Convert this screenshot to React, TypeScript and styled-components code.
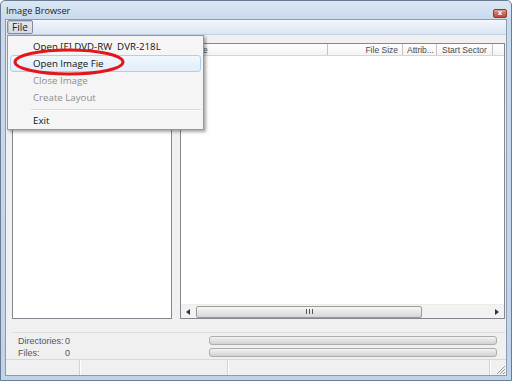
import React from 'react';
import styled, { createGlobalStyle } from 'styled-components';

const GlobalStyle = createGlobalStyle`
  html, body {
    margin: 0;
    padding: 0;
    width: 512px;
    height: 381px;
    overflow: hidden;
    background: #ffffff;
  }
  * {
    box-sizing: border-box;
  }
`;

const Window = styled.div`
  position: relative;
  width: 512px;
  height: 381px;
  display: flex;
  flex-direction: column;
  border: 1px solid #6b7c92;
  border-radius: 5px 5px 0 0;
  background: linear-gradient(180deg, #dbe7f4 0px, #c9daee 18px, #bfd3ea 100%);
  font-family: "Open Sans", "Noto Sans", sans-serif;
`;

const TitleBar = styled.div`
  height: 18px;
  display: flex;
  align-items: flex-start;
  justify-content: space-between;
  padding: 0 4px 0 5px;
`;

const Title = styled.span`
  margin-top: 3px;
  font-size: 9.2px;
  color: #222222;
`;

const CloseButton = styled.div`
  margin-top: 8px;
  width: 14px;
  height: 9px;
  border: 1px solid #8a3b30;
  border-radius: 2px;
  background: linear-gradient(180deg, #e3a392 0%, #cf6a55 50%, #c04a36 100%);
  color: #ffffff;
  font-family: "DejaVu Sans", sans-serif;
  font-size: 7px;
  font-weight: bold;
  line-height: 7px;
  text-align: center;
`;

const Client = styled.div`
  position: relative;
  flex: 1;
  margin: 0 4px 4px 4px;
  border: 1px solid #8a9cb4;
  background: #f0f0f0;
  display: flex;
  flex-direction: column;
`;

const MenuBar = styled.div`
  height: 15px;
  display: flex;
  align-items: center;
  padding-left: 1px;
  background: linear-gradient(180deg, #f4f7fb 0%, #e6edf7 50%, #dbe5f2 100%);
  border-bottom: 1px solid #c5d2e3;
`;

const MenuButton = styled.div`
  height: 14px;
  padding: 0 4px;
  display: flex;
  align-items: center;
  border: 1px solid #7f8ea3;
  border-radius: 2px;
  background: linear-gradient(180deg, #e4e9f0 0%, #d3dbe6 100%);
  box-shadow: inset 1px 1px 1px rgba(0, 0, 0, 0.15);
  font-size: 10px;
  color: #1a1a1a;
`;

const Body = styled.div`
  height: 284px;
  display: flex;
  padding: 8px 1px 0 6px;
  gap: 8px;
`;

const TreePane = styled.div`
  width: 160px;
  border: 1px solid #828790;
  background: #ffffff;
`;

const ListPane = styled.div`
  flex: 1;
  display: flex;
  flex-direction: column;
  border: 1px solid #828790;
  background: #ffffff;
`;

const HeaderRow = styled.div`
  height: 12px;
  display: flex;
  border-bottom: 1px solid #d5d5d5;
  background: linear-gradient(180deg, #ffffff 0%, #f3f3f3 100%);
  font-family: "Liberation Sans", Arial, sans-serif;
  font-size: 8.5px;
  color: #4a4a4a;
`;

const HeaderCell = styled.div<{ $w?: number; $align?: string }>`
  ${(p) => (p.$w ? `width: ${p.$w}px;` : 'flex: 1;')}
  display: flex;
  align-items: center;
  justify-content: ${(p) => p.$align || 'flex-start'};
  padding: 0 4px;
  border-right: 1px solid #c4c4c4;
  white-space: nowrap;
  overflow: hidden;
`;

const HeaderFill = styled.div`
  flex: 1;
`;

const ListContent = styled.div`
  flex: 1;
`;

const HScroll = styled.div`
  height: 14px;
  display: flex;
  align-items: center;
  background: #f2f2f2;
  border-top: 1px solid #ececec;
`;

const ArrowBox = styled.div`
  width: 14px;
  height: 13px;
  display: flex;
  align-items: center;
  justify-content: center;
`;

const Thumb = styled.div`
  width: 226px;
  height: 12px;
  margin-left: 1px;
  border: 1px solid #9a9a9a;
  border-radius: 2px;
  background: linear-gradient(180deg, #f6f6f6 0%, #e6e6e6 50%, #d7d7d7 100%);
  display: flex;
  align-items: center;
  justify-content: center;
`;

const Grip = styled.div`
  width: 7px;
  height: 5px;
  background: repeating-linear-gradient(90deg, #555 0px, #555 1px, transparent 1px, transparent 3px);
`;

const Track = styled.div`
  flex: 1;
`;

const InfoPanel = styled.div`
  height: 27px;
  margin: 13px 1px 0 6px;
  border-top: 1px solid #dedede;
  display: flex;
  justify-content: space-between;
  font-family: "Liberation Sans", Arial, sans-serif;
  font-size: 9px;
  color: #555555;
`;

const Counts = styled.div`
  display: grid;
  grid-template-columns: 47px auto;
  grid-auto-rows: 12px;
  align-items: center;
  padding: 2px 0 0 6px;
`;

const Bars = styled.div`
  width: 288px;
  margin-right: 8px;
  padding-top: 3px;
  display: flex;
  flex-direction: column;
  gap: 3px;
`;

const ProgressBar = styled.div`
  height: 9px;
  border: 1px solid #adadad;
  border-radius: 3px;
  background: linear-gradient(180deg, #f3f3f3 0%, #e2e2e2 50%, #d2d2d2 100%);
`;

const StatusBar = styled.div`
  flex: 1;
  display: flex;
  border-top: 1px solid #d8d8d8;
  background: #f0f0f0;
`;

const StatusPanel = styled.div<{ $w?: number }>`
  ${(p) => (p.$w ? `width: ${p.$w}px;` : 'flex: 1;')}
  margin-right: 2px;
  border-right: 1px solid #d3d3d3;
  box-shadow: 1px 0 0 #ffffff;
`;

const Gripper = styled.div`
  width: 14px;
  display: flex;
  align-items: flex-end;
  justify-content: flex-end;
`;

const Dropdown = styled.div`
  position: absolute;
  left: 1px;
  top: 15px;
  width: 197px;
  height: 95px;
  padding: 2px 2px;
  border: 1px solid #979797;
  background: #f5f5f5;
  box-shadow: 2px 2px 3px rgba(0, 0, 0, 0.35);
  font-size: 9.7px;
`;

const MenuItem = styled.div<{ $active?: boolean; $disabled?: boolean }>`
  height: 17px;
  display: flex;
  align-items: center;
  padding-left: 22px;
  color: ${(p) => (p.$disabled ? '#8e8e8e' : '#111111')};
  border: 1px solid ${(p) => (p.$active ? '#aed0ee' : 'transparent')};
  border-radius: 3px;
  background: ${(p) =>
    p.$active ? 'linear-gradient(180deg, #f1f7fd 0%, #e2eefb 100%)' : 'transparent'};
  white-space: pre;
`;

const Separator = styled.div`
  height: 6px;
  margin-left: 21px;
  display: flex;
  align-items: center;

  &::after {
    content: '';
    flex: 1;
    height: 1px;
    background: #d7d7d7;
    box-shadow: 0 1px 0 #ffffff;
  }
`;

const Annotation = styled.svg`
  position: absolute;
  left: 11px;
  top: 46px;
`;

const Arrow = ({ dir }: { dir: 'left' | 'right' }) => (
  <svg width="4" height="6" viewBox="0 0 4 6">
    {dir === 'left' ? <path d="M4 0 L0 3 L4 6 Z" fill="#333" /> : <path d="M0 0 L4 3 L0 6 Z" fill="#333" />}
  </svg>
);

export default function App() {
  return (
    <>
      <GlobalStyle />
      <Window>
        <TitleBar>
          <Title>Image Browser</Title>
          <CloseButton>x</CloseButton>
        </TitleBar>
        <Client>
          <MenuBar>
            <MenuButton>File</MenuButton>
          </MenuBar>
          <Body>
            <TreePane />
            <ListPane>
              <HeaderRow>
                <HeaderCell $w={147}>Name</HeaderCell>
                <HeaderCell $w={75} $align="flex-end">File Size</HeaderCell>
                <HeaderCell $w={34}>Attrib...</HeaderCell>
                <HeaderCell $w={56} $align="center">Start Sector</HeaderCell>
                <HeaderFill />
              </HeaderRow>
              <ListContent />
              <HScroll>
                <ArrowBox>
                  <Arrow dir="left" />
                </ArrowBox>
                <Thumb>
                  <Grip />
                </Thumb>
                <Track />
                <ArrowBox>
                  <Arrow dir="right" />
                </ArrowBox>
              </HScroll>
            </ListPane>
          </Body>
          <InfoPanel>
            <Counts>
              <span>Directories:</span>
              <span>0</span>
              <span>Files:</span>
              <span>0</span>
            </Counts>
            <Bars>
              <ProgressBar />
              <ProgressBar />
            </Bars>
          </InfoPanel>
          <StatusBar>
            <StatusPanel $w={74} />
            <StatusPanel $w={146} />
            <StatusPanel />
            <Gripper>
              <svg width="11" height="11" viewBox="0 0 11 11">
                <path d="M10 2 L2 10 M10 5 L5 10 M10 8 L8 10" stroke="#9a9a9a" strokeWidth="1" />
              </svg>
            </Gripper>
          </StatusBar>
          <Dropdown>
            <MenuItem>{'Open [F] DVD-RW  DVR-218L'}</MenuItem>
            <MenuItem $active>Open Image Fie</MenuItem>
            <MenuItem $disabled>Close Image</MenuItem>
            <MenuItem $disabled>Create Layout</MenuItem>
            <Separator />
            <MenuItem>Exit</MenuItem>
          </Dropdown>
        </Client>
        <Annotation width="114" height="30" viewBox="0 0 114 30">
          <ellipse cx="57" cy="15" rx="54" ry="12" fill="none" stroke="#e3161c" strokeWidth="3" />
        </Annotation>
      </Window>
    </>
  );
}
